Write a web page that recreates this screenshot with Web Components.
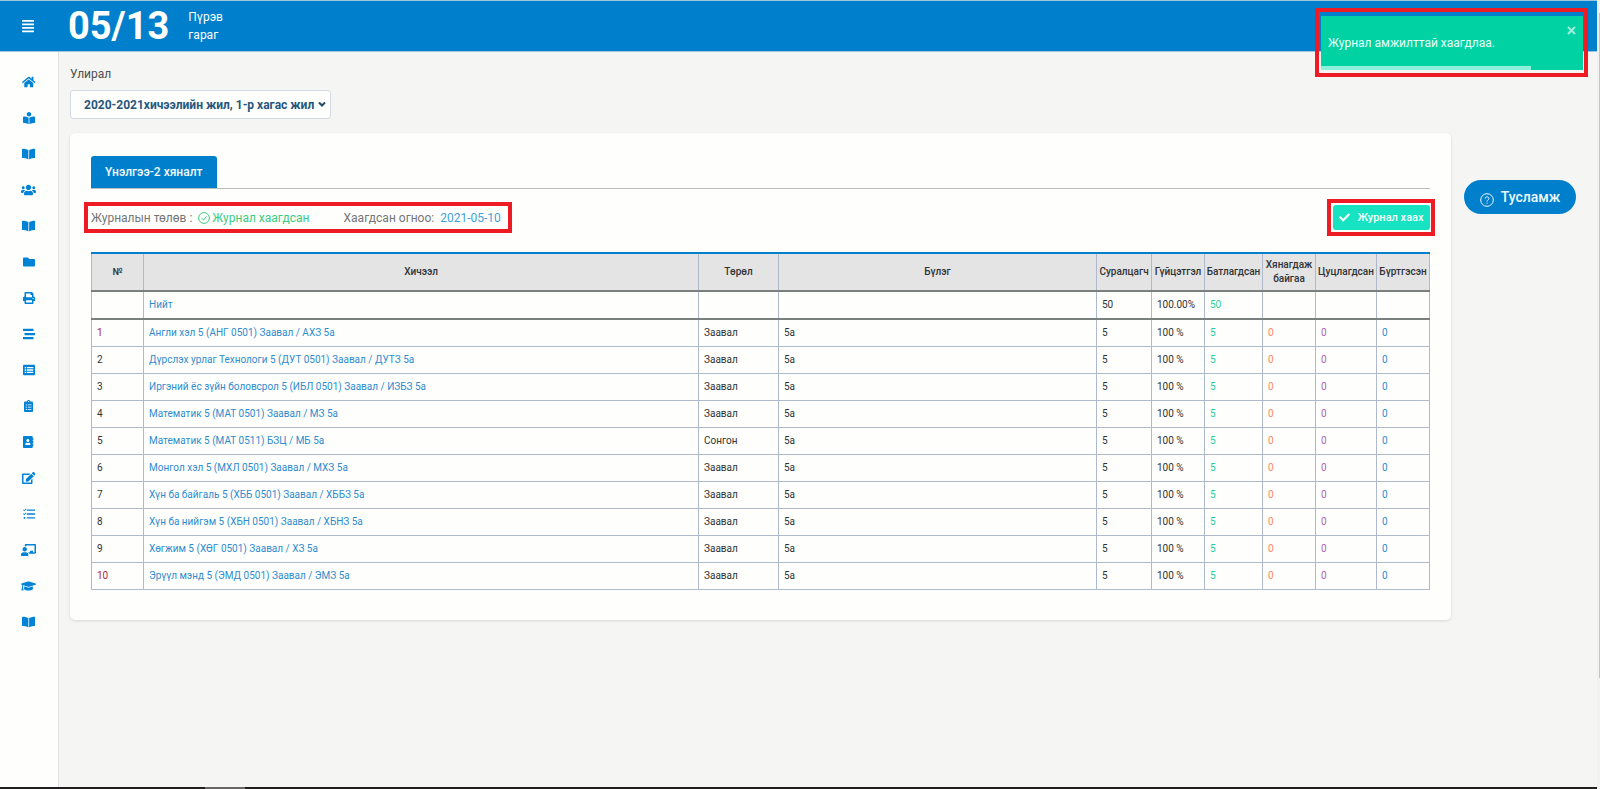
<!DOCTYPE html>
<html lang="mn">
<head>
<meta charset="utf-8">
<title>Журнал</title>
<style>
html,body{margin:0;height:100%}
body{font-family:Roboto,"Noto Sans",sans-serif;font-size:12px;line-height:18px;color:#55585c;background:#f5f6f3;
--blue:#0080cc;--paper:#fefffc;--mark:#ed1c24;--grid:#aebacb;--rule:#7a807d}
</style>
</head>
<body>
<app-shell>
  <app-header slot="header" date="05/13"><span>Пүрэв<br>гараг</span></app-header>
  <side-nav slot="nav"></side-nav>
  <term-select></term-select>
  <journal-card></journal-card>
  <help-button slot="aside">Тусламж</help-button>
  <toast-message slot="toast">Журнал амжилттай хаагдлаа.</toast-message>
</app-shell>
<script>
const ICONS={
bars:[448,'M432 416H16a16 16 0 0 0-16 16v32a16 16 0 0 0 16 16h416a16 16 0 0 0 16-16v-32a16 16 0 0 0-16-16zm0-128H16a16 16 0 0 0-16 16v32a16 16 0 0 0 16 16h416a16 16 0 0 0 16-16v-32a16 16 0 0 0-16-16zm0-128H16a16 16 0 0 0-16 16v32a16 16 0 0 0 16 16h416a16 16 0 0 0 16-16v-32a16 16 0 0 0-16-16zm0-128H16A16 16 0 0 0 0 48v32a16 16 0 0 0 16 16h416a16 16 0 0 0 16-16V48a16 16 0 0 0-16-16z'],
home:[576,'M280.37 148.26L96 300.11V464a16 16 0 0 0 16 16l112.06-.29a16 16 0 0 0 15.92-16V368a16 16 0 0 1 16-16h64a16 16 0 0 1 16 16v95.64a16 16 0 0 0 16 16.05L464 480a16 16 0 0 0 16-16V300L295.67 148.26a12.19 12.19 0 0 0-15.3 0zM571.6 251.47L488 182.56V44.05a12 12 0 0 0-12-12h-56a12 12 0 0 0-12 12v72.61L318.47 43a48 48 0 0 0-61 0L4.34 251.47a12 12 0 0 0-1.6 16.9l25.5 31A12 12 0 0 0 45.15 301l235.22-193.74a12.19 12.19 0 0 1 15.3 0L530.9 301a12 12 0 0 0 16.9-1.6l25.5-31a12 12 0 0 0-1.7-16.93z'],
reader:[512,'M352 96c0-53.02-42.98-96-96-96s-96 42.98-96 96 42.98 96 96 96 96-42.98 96-96zM233.59 241.1c-59.33-36.32-155.43-46.3-203.79-49.05C13.55 191.13 0 203.51 0 219.14v222.8c0 14.33 11.59 26.28 26.49 27.05 43.66 2.29 131.99 10.68 193.04 41.43 9.37 4.72 20.48-1.71 20.48-11.87V252.56c-.01-4.67-2.32-8.95-6.42-11.46zm248.61-49.05c-48.35 2.74-144.46 12.73-203.78 49.05-4.1 2.51-6.41 6.96-6.41 11.63v245.79c0 10.19 11.14 16.63 20.54 11.9 61.04-30.72 149.32-39.11 192.97-41.4 14.9-.78 26.49-12.73 26.49-27.06V219.14c-.01-15.63-13.56-28.01-29.81-27.09z'],
book:[576,'M542.22 32.05c-54.8 3.11-163.72 14.43-230.96 55.59-4.64 2.84-7.27 7.89-7.27 13.17v363.87c0 11.55 12.63 18.85 23.28 13.49 69.18-34.82 169.23-44.32 218.7-46.92 16.89-.89 30.02-14.43 30.02-30.66V62.75c.01-17.71-15.35-31.74-33.77-30.7zM264.73 87.64C197.5 46.48 88.58 35.17 33.78 32.05 15.36 31.01 0 45.04 0 62.75V400.6c0 16.24 13.13 29.78 30.02 30.66 49.49 2.6 149.59 12.11 218.77 46.95 10.62 5.35 23.21-1.94 23.21-13.46V100.63c0-5.29-2.62-10.14-7.27-12.99z'],
users:[640,'M96 224c35.3 0 64-28.7 64-64s-28.7-64-64-64-64 28.7-64 64 28.7 64 64 64zm448 0c35.3 0 64-28.7 64-64s-28.7-64-64-64-64 28.7-64 64 28.7 64 64 64zm32 32h-64c-17.6 0-33.5 7.1-45.1 18.6 40.3 22.1 68.9 62 75.1 109.4h66c17.7 0 32-14.3 32-32v-32c0-35.3-28.7-64-64-64zm-256 0c61.9 0 112-50.1 112-112S381.9 32 320 32 208 82.1 208 144s50.1 112 112 112zm76.8 32h-8.3c-20.8 10-43.9 16-68.5 16s-47.6-6-68.5-16h-8.3C179.6 288 128 339.6 128 403.2V432c0 26.5 21.5 48 48 48h288c26.5 0 48-21.5 48-48v-28.8c0-63.6-51.6-115.2-115.2-115.2zm-223.7-13.4C161.5 263.1 145.6 256 128 256H64c-35.3 0-64 28.7-64 64v32c0 17.7 14.3 32 32 32h65.9c6.3-47.4 34.9-87.3 75.2-109.4z'],
folder:[512,'M464 128H272l-64-64H48C21.49 64 0 85.49 0 112v288c0 26.51 21.49 48 48 48h416c26.51 0 48-21.49 48-48V176c0-26.51-21.49-48-48-48z'],
print:[512,'M448 192V77.25c0-8.49-3.37-16.62-9.37-22.63L393.37 9.37c-6-6-14.14-9.37-22.63-9.37H96C78.33 0 64 14.33 64 32v160c-35.35 0-64 28.65-64 64v112c0 8.84 7.16 16 16 16h48v96c0 17.67 14.33 32 32 32h320c17.67 0 32-14.33 32-32v-96h48c8.84 0 16-7.16 16-16V256c0-35.35-28.65-64-64-64zm-64 256H128v-96h256v96zm0-224H128V64h192v48c0 8.84 7.16 16 16 16h48v96zm48 72c-13.25 0-24-10.75-24-24 0-13.26 10.75-24 24-24s24 10.74 24 24c0 13.25-10.75 24-24 24z'],
stream:[512,'M16 128h416c8.84 0 16-7.16 16-16V48c0-8.84-7.16-16-16-16H16C7.16 32 0 39.16 0 48v64c0 8.84 7.16 16 16 16zm480 80H80c-8.84 0-16 7.16-16 16v64c0 8.84 7.16 16 16 16h416c8.84 0 16-7.16 16-16v-64c0-8.84-7.16-16-16-16zm-64 176H16c-8.84 0-16 7.16-16 16v64c0 8.84 7.16 16 16 16h416c8.84 0 16-7.16 16-16v-64c0-8.84-7.16-16-16-16z'],
list:[512,'M464 32H48C21.5 32 0 53.500 0 80v352c0 26.500 21.500 48 48 48h416c26.500 0 48-21.500 48-48V80c0-26.500-21.500-48-48-48zM72 128h56v56H72zm88 0h280v56H160zM72 228h56v56H72zm88 0h280v56H160zM72 328h56v56H72zm88 0h280v56H160z'],
clipboard:[384,'M336 64h-80c0-35.3-28.7-64-64-64s-64 28.7-64 64H48C21.5 64 0 85.5 0 112v352c0 26.5 21.5 48 48 48h288c26.5 0 48-21.5 48-48V112c0-26.5-21.5-48-48-48zM96 424c-13.3 0-24-10.7-24-24s10.7-24 24-24 24 10.7 24 24-10.7 24-24 24zm0-96c-13.3 0-24-10.7-24-24s10.7-24 24-24 24 10.7 24 24-10.7 24-24 24zm0-96c-13.3 0-24-10.7-24-24s10.7-24 24-24 24 10.7 24 24-10.7 24-24 24zm96-192c13.3 0 24 10.7 24 24s-10.7 24-24 24-24-10.7-24-24 10.7-24 24-24zm128 368c0 4.400-3.600 8-8 8H168c-4.400 0-8-3.600-8-8v-16c0-4.400 3.600-8 8-8h144c4.400 0 8 3.600 8 8v16zm0-96c0 4.400-3.600 8-8 8H168c-4.400 0-8-3.600-8-8v-16c0-4.400 3.600-8 8-8h144c4.400 0 8 3.600 8 8v16zm0-96c0 4.400-3.600 8-8 8H168c-4.400 0-8-3.600-8-8v-16c0-4.400 3.600-8 8-8h144c4.400 0 8 3.600 8 8v16z'],
address:[448,'M436 160c6.6 0 12-5.4 12-12v-40c0-6.6-5.4-12-12-12h-20V48c0-26.5-21.5-48-48-48H48C21.5 0 0 21.5 0 48v416c0 26.5 21.5 48 48 48h320c26.5 0 48-21.5 48-48v-48h20c6.6 0 12-5.4 12-12v-40c0-6.6-5.4-12-12-12h-20v-64h20c6.6 0 12-5.4 12-12v-40c0-6.6-5.4-12-12-12h-20v-64h20zm-228-32c35.3 0 64 28.7 64 64s-28.7 64-64 64-64-28.7-64-64 28.7-64 64-64zm112 236.8c0 10.6-10 19.2-22.4 19.2H118.4C106 384 96 375.4 96 364.8v-19.2c0-31.8 30.1-57.6 67.2-57.6h5c12.3 5.1 25.7 8 39.8 8s27.6-2.9 39.8-8h5c37.1 0 67.2 25.8 67.2 57.6v19.2z'],
edit:[576,'M402.6 83.2l90.2 90.2c3.8 3.8 3.8 10 0 13.8L274.4 405.6l-92.8 10.3c-12.4 1.4-22.9-9.1-21.5-21.5l10.3-92.8L388.8 83.2c3.8-3.8 10-3.8 13.8 0zm162-22.9l-48.8-48.8c-15.2-15.2-39.9-15.2-55.2 0l-35.4 35.4c-3.8 3.8-3.8 10 0 13.8l90.2 90.2c3.8 3.8 10 3.8 13.8 0l35.4-35.4c15.2-15.3 15.2-40 0-55.2zM384 346.2V448H64V128h229.8c3.2 0 6.2-1.3 8.5-3.5l40-40c7.6-7.6 2.2-20.5-8.5-20.5H48C21.5 64 0 85.5 0 112v352c0 26.5 21.5 48 48 48h352c26.5 0 48-21.5 48-48V306.2c0-10.7-12.9-16-20.5-8.5l-40 40c-2.2 2.3-3.5 5.3-3.5 8.5z'],
tasks:[512,'M160 64h352v56H160zM160 228h352v56H160zM160 392h352v56H160zM0 90l28-26 28 28 64-66 24 24-88 92zM0 254l28-26 28 28 64-66 24 24-88 92zM64 380a40 40 0 1 0 .1 0z'],
teacher:[640,'M208 352c-2.39 0-4.78.35-7.06 1.09C187.98 357.3 174.35 360 160 360c-14.35 0-27.98-2.7-40.95-6.91-2.28-.74-4.66-1.09-7.05-1.09C49.94 352-.33 402.48 0 464.62.14 490.88 21.73 512 48 512h224c26.27 0 47.86-21.12 48-47.38.33-62.14-49.94-112.62-112-112.62zm-48-32c53.02 0 96-42.98 96-96s-42.98-96-96-96-96 42.98-96 96 42.98 96 96 96zM592 0H208c-26.47 0-48 22.25-48 49.59V96c23.42 0 45.1 6.78 64 17.8V64h352v288h-64v-64H384v64h-76.24c19.1 16.69 33.12 38.73 39.69 64H592c26.47 0 48-22.25 48-49.59V49.59C640 22.25 618.47 0 592 0z'],
cap:[640,'M622.34 153.2L343.4 67.5c-15.2-4.67-31.6-4.67-46.79 0L17.66 153.2c-23.54 7.23-23.54 38.36 0 45.59l48.63 14.94c-10.67 13.19-17.23 29.28-17.88 46.9C38.78 266.15 32 276.11 32 288c0 10.78 5.68 19.85 13.86 25.65L20.33 428.53C18.11 438.52 25.71 448 35.94 448h56.11c10.24 0 17.84-9.48 15.62-19.47L82.14 313.65C90.32 307.85 96 298.78 96 288c0-11.57-6.47-21.25-15.66-26.87.76-15.02 8.44-28.3 20.69-36.72L296.6 284.5c9.06 2.78 26.44 6.25 46.79 0l278.95-85.7c23.55-7.24 23.55-38.36 0-45.6zM352.79 315.09c-28.53 8.76-52.84 3.92-65.59 0l-145.02-44.55L128 384c0 35.35 85.96 64 192 64s192-28.65 192-64l-14.18-113.47-145.03 44.56z'],
check:[512,'M173.898 439.404l-166.4-166.4c-9.997-9.997-9.997-26.206 0-36.204l36.203-36.204c9.997-9.998 26.207-9.998 36.204 0L192 312.69 432.095 72.596c9.997-9.997 26.207-9.997 36.204 0l36.203 36.204c9.997 9.997 9.997 26.206 0 36.204l-294.4 294.401c-9.998 9.997-26.207 9.997-36.204-.001z']
};
const define=(name,html)=>customElements.define(name,class extends HTMLElement{
  constructor(){super();this.attachShadow({mode:'open'}).innerHTML=typeof html==='function'?html(this):html}
});

define('fa-icon',el=>{const [w,d]=ICONS[el.getAttribute('name')];
  return `<style>:host{display:inline-flex;height:12px}svg{height:100%;fill:currentColor;fill-rule:evenodd}</style><svg viewBox="0 0 ${w} 512" aria-hidden="true"><path d="${d}"/></svg>`});

define('app-shell',`<style>
:host{display:grid;grid-template:auto 1fr 2px/minmax(0,1fr) 3px;min-height:100vh}
.body{display:flex;min-width:0}
main{flex:1;min-width:0;padding:13px 11px 20px}
aside{flex:none;width:135px;padding:128px 0 0 2px;box-sizing:border-box}
.rail{grid-column:2;grid-row:1/4;background:linear-gradient(#c4c5c5,#c4c5c5) right 13px/1px 665px no-repeat #f1f2f0}
.strip{background:linear-gradient(90deg,#0000 205px,#6a6665 205px 245px,#0000 245px) #221e1f;grid-row:3}
slot[name=toast]::slotted(*){position:absolute;top:8px;right:12px}
</style>
<slot name="header"></slot><div class="rail"></div>
<div class="body"><slot name="nav"></slot><main><slot></slot></main><aside><slot name="aside"></slot></aside></div>
<div class="strip"></div><slot name="toast"></slot>`);

define('app-header',el=>`<style>
:host{display:block}
header{display:flex;align-items:center;height:50px;border-block:1px solid #9fc6de;background:var(--blue);color:#fefffc}
button{all:unset;width:56px;display:flex;justify-content:center;margin-right:12px}
fa-icon{height:14px}
time{font-size:38px;font-weight:700;line-height:50px;margin-right:19px}
</style><header><button aria-label="Цэс"><fa-icon name="bars"></fa-icon></button><time>${el.getAttribute('date')}</time><slot></slot></header>`);

define('side-nav',`<style>
:host{display:block;flex:none;width:58px;background:var(--paper);border-right:1px solid #dfe2e3}
nav{display:flex;flex-direction:column;padding-top:12px;color:#0083d6}
a{color:inherit;height:36px;display:flex;align-items:center;justify-content:center;padding-right:1px}
</style><nav>${['home','reader','book','users','book','folder','print','stream','list','clipboard','address','edit','tasks','teacher','cap','book'].map(n=>`<a href="#" aria-label="${n}"><fa-icon name="${n}"></fa-icon></a>`).join('')}</nav>`);

define('term-select',`<style>
:host{display:block;margin-bottom:14px}
label{display:block;margin-bottom:7px;color:#4c4f52}
.box{position:relative;width:261px}
select{appearance:none;width:100%;height:29px;box-sizing:border-box;border:1px solid #d3dae2;border-radius:3px;background:var(--paper);padding:0 13px;font:700 12px/18px Roboto,sans-serif;color:#27567d;display:block}
svg{position:absolute;right:5px;top:11px;width:8px;height:7px;fill:none;stroke:#234a6b;stroke-width:2}
</style><label for="term">Улирал</label><div class="box"><select id="term"><option>2020-2021хичээлийн жил, 1-р хагас жил</option></select><svg viewBox="0 0 8 7"><path d="M1 1.500l3 3 3-3"/></svg></div>`);

const rows=['Англи хэл 5 (АНГ 0501) Заавал / АХЗ 5а','Дүрслэх урлаг Технологи 5 (ДУТ 0501) Заавал / ДУТЗ 5а','Иргэний ёс зүйн боловсрол 5 (ИБЛ 0501) Заавал / ИЗБЗ 5а','Математик 5 (МАТ 0501) Заавал / МЗ 5а','Математик 5 (МАТ 0511) БЗЦ / МБ 5а','Монгол хэл 5 (МХЛ 0501) Заавал / МХЗ 5а','Хүн ба байгаль 5 (ХББ 0501) Заавал / ХББЗ 5а','Хүн ба нийгэм 5 (ХБН 0501) Заавал / ХБНЗ 5а','Хөгжим 5 (ХӨГ 0501) Заавал / ХЗ 5а','Эрүүл мэнд 5 (ЭМД 0501) Заавал / ЭМЗ 5а'];
define('journal-table',`<style>
:host{display:block}
table{width:100%;table-layout:fixed;border-collapse:collapse;font-size:10px;line-height:14px;color:#303234}
th,td{border:1px solid var(--grid);padding:0 5px;text-align:left;height:27px;box-sizing:border-box}
th{background:#e4e4e5;text-align:center;font-weight:500;height:38px;padding:0;border-top:2px solid var(--blue);border-bottom:2px solid var(--rule)}
.sum td{height:28px;border-bottom:2px solid var(--rule)}
a{color:#2e8bd0;text-decoration:none}
td:nth-child(7){color:#1fd09b}td:nth-child(8){color:#ff8560}td:nth-child(9){color:#ad5fba}td:nth-child(10){color:#2e8bd0}
.hot{color:#b3243f}
</style><table><colgroup>${['52px','','80px','318px','55px','53px','58px','53px','61px','53px'].map(w=>`<col style="width:${w||'auto'}">`).join('')}</colgroup>
<thead><tr>${['№','Хичээл','Төрөл','Бүлэг','Суралцагч','Гүйцэтгэл','Батлагдсан','Хянагдаж байгаа','Цуцлагдсан','Бүртгэсэн'].map(t=>`<th scope="col">${t}</th>`).join('')}</tr></thead>
<tbody><tr class="sum"><td></td><td><a href="#">Нийт</a></td><td></td><td></td><td>50</td><td>100.00%</td><td>50</td><td></td><td></td><td></td></tr>
${rows.map((r,i)=>`<tr><td${i==0||i==9?' class="hot"':''}>${i+1}</td><td><a href="#">${r}</a></td><td>${i==4?'Сонгон':'Заавал'}</td><td>5а</td><td>5</td><td>100 %</td><td>5</td><td>0</td><td>0</td><td>0</td></tr>`).join('')}</tbody></table>`);

define('journal-card',`<style>
:host{display:block;background:var(--paper);border-radius:5px;box-shadow:0 1px 3px #0000001f;padding:23px 21px 30px}
.tabs{display:flex;border-bottom:1px solid #b9bdbd}
.tabs button{all:unset;box-sizing:border-box;height:32px;padding:0 14px;border-radius:3px 3px 0 0;background:var(--blue);color:#f4fafc;font-weight:500}
.bar{display:flex;justify-content:space-between;align-items:center;margin:10px -5px 16px -7px}
.mark{border:4px solid var(--mark);display:flex;align-items:center;box-sizing:border-box}
.state{height:31px;padding:0 7px 0 3px;white-space:pre;color:#737578}
.state svg{width:12px;height:12px;margin:0 2px 0 6px;fill:none;stroke:#3ccb82}
.ok{color:#3ccb82;margin-right:34px}.date{color:#3d9fdc;margin-left:6px}
.act{height:37px;padding:2px 1px 2px 2px}
.act button{all:unset;box-sizing:border-box;height:25px;width:97px;border-radius:3px;background:#17e2c1;color:#f4fffc;font-size:11px;font-weight:500;display:flex;align-items:center;justify-content:center;gap:7px}
fa-icon{height:11px}
</style><div class="tabs" role="tablist"><button role="tab">Үнэлгээ-2 хяналт</button></div>
<div class="bar"><div class="mark state"><span>Журналын төлөв :</span><svg viewBox="0 0 12 12"><circle cx="6" cy="6" r="5.400"/><path d="M3.500 6.200l2 1.800 3-3.700"/></svg><span class="ok">Журнал хаагдсан</span><span>Хаагдсан огноо:</span><span class="date">2021-05-10</span></div>
<div class="mark act"><button><fa-icon name="check"></fa-icon>Журнал хаах</button></div></div>
<journal-table></journal-table>`);

define('help-button',`<style>
:host{display:block}
button{all:unset;box-sizing:border-box;width:112px;height:34px;border-radius:17px;background:var(--blue);color:#eef8fc;font-size:14px;font-weight:500;display:flex;align-items:center;justify-content:center;gap:7px}
svg{width:14px;height:14px;fill:none;stroke:currentColor;margin-top:5px}
</style><button><svg viewBox="0 0 14 14"><circle cx="7" cy="7" r="6.300"/><path d="M5.200 5.600c0-2.400 3.700-2.300 3.700-.1C8.900 6.900 7 6.900 7 8.500M7 9.600v1.100"/></svg><slot></slot></button>`);

define('toast-message',`<style>
:host{display:block;border:4px solid var(--mark);padding:4px 1px 3px 2px;width:262px}
.t{position:relative;display:flex;align-items:center;height:54px;padding:0 7px;background:#00d2a3;color:#e9fff8}
button{all:unset;position:absolute;right:7px;top:10px;width:9px;height:9px;display:flex}
svg{width:9px;height:9px;stroke:#9cf0da;stroke-width:2}
.p{position:absolute;left:0;bottom:0;height:4px;width:80%;background:#8df0dc}
</style><div class="t" role="status"><slot></slot><button aria-label="Хаах"><svg viewBox="0 0 9 9"><path d="M1 1l7 7M8 1l-7 7"/></svg></button><div class="p"></div></div>`);
</script>
</body>
</html>
